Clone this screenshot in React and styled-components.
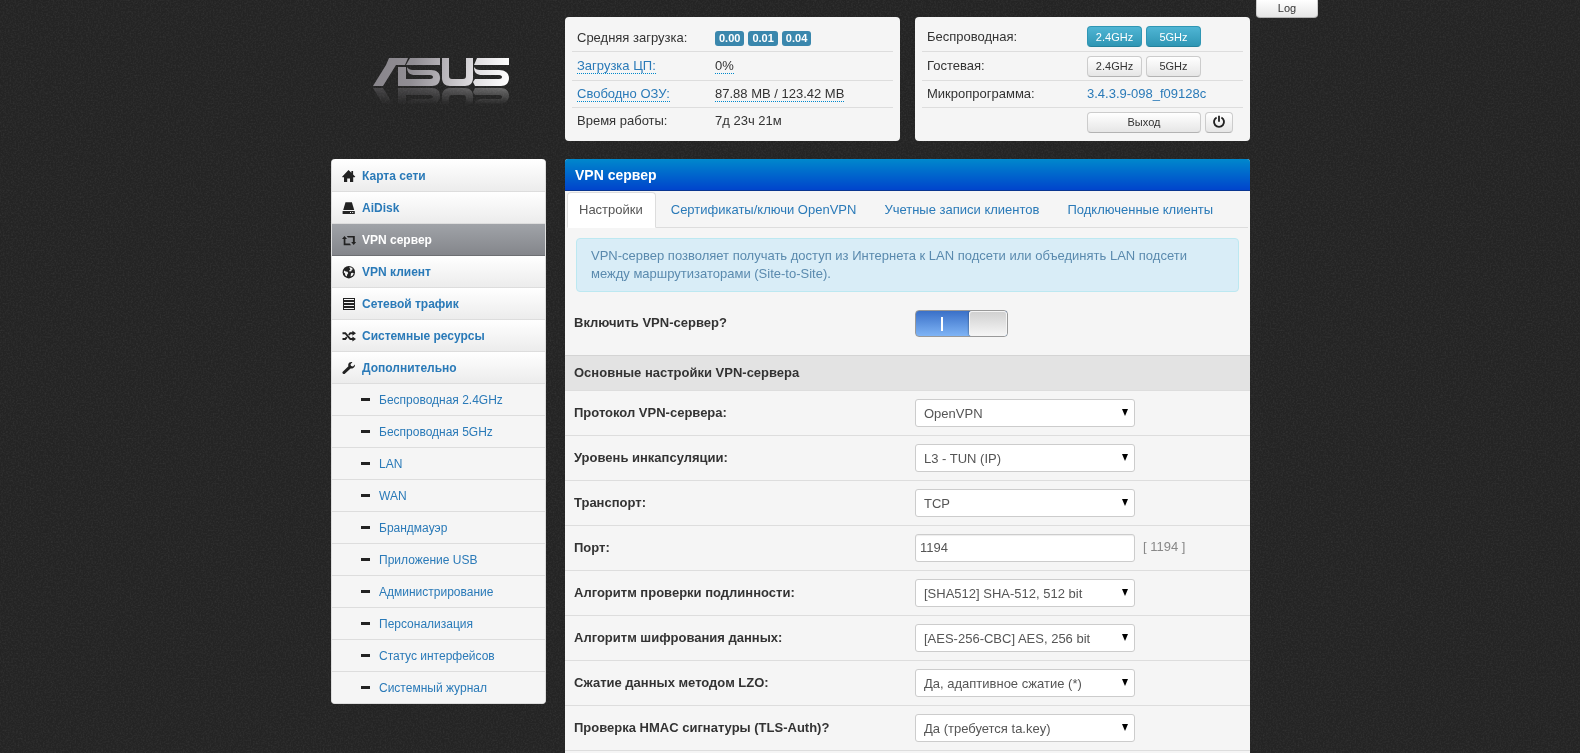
import React, { useState } from 'react';
import styled, { createGlobalStyle, css } from 'styled-components';

const menu = [
    { title: 'Карта сети', icon: 'home' },
    { title: 'AiDisk', icon: 'disk' },
    { title: 'VPN сервер', icon: 'retweet' },
    { title: 'VPN клиент', icon: 'globe' },
    { title: 'Сетевой трафик', icon: 'tasks' },
    { title: 'Системные ресурсы', icon: 'random' },
    { title: 'Дополнительно', icon: 'wrench' },
];

const subMenu = [
    'Беспроводная 2.4GHz',
    'Беспроводная 5GHz',
    'LAN',
    'WAN',
    'Брандмауэр',
    'Приложение USB',
    'Администрирование',
    'Персонализация',
    'Статус интерфейсов',
    'Системный журнал',
];

const tabs = [
    'Настройки',
    'Сертификаты/ключи OpenVPN',
    'Учетные записи клиентов',
    'Подключенные клиенты',
];

const fields = [
    { id: 'type', label: 'Протокол VPN-сервера:', options: ['OpenVPN'] },
    { id: 'atun', label: 'Уровень инкапсуляции:', options: ['L3 - TUN (IP)'] },
    { id: 'prot', label: 'Транспорт:', options: ['TCP'] },
    { id: 'port', label: 'Порт:', value: '1194', hint: '[ 1194 ]' },
    { id: 'mdig', label: 'Алгоритм проверки подлинности:', options: ['[SHA512] SHA-512, 512 bit'] },
    { id: 'ciph', label: 'Алгоритм шифрования данных:', options: ['[AES-256-CBC] AES, 256 bit'] },
    { id: 'clzo', label: 'Сжатие данных методом LZO:', options: ['Да, адаптивное сжатие (*)'] },
    { id: 'tlsa', label: 'Проверка HMAC сигнатуры (TLS-Auth)?', options: ['Да (требуется ta.key)'] },
];

function Icon({ name }) {
    return (
        <Glyph viewBox="0 0 14 14" aria-hidden="true">
            {name === 'home' && (
                <path d="M6.5 1 9.4 3.8V2h1.7v3.5l2.2 2.2-.6.6h-1.5V13H8V9.4H5.2V13H2V8.3H.5l-.4-.6z" />
            )}
            {name === 'disk' && (
                <>
                    <path d="M3.5 1.2h6.4L12.2 9H1.2z" />
                    <path fillRule="evenodd" d="M.6 10h12.2v3H.6zM8 11v1h1v-1zM10.2 11v1h1v-1z" />
                </>
            )}
            {name === 'retweet' && (
                <path d="M2.5 3 5 6H3.4v4.6h4.4l1.2 1.6H1.7V6H0zM4.8 3h8v6h1.4l-2.5 3-2.5-3h1.7V4.6H6z" />
            )}
            {name === 'globe' && (
                <>
                    <circle cx="6.8" cy="7.2" r="6.2" />
                    <path fill="#f3f3f3" d="M7.2 2.2 9.3 2.4 11.2 4.2 9.9 4.6 9.3 6.2 7.6 6.6 7.2 5.4 8.4 4.4zM2.2 5.4 3.8 6.4 5.5 6.8 6.2 8.2 5.2 9.4 4.8 11.4 3.2 10.2 3 8.6 1.8 7.6zM9 8.2 10.8 7.8 11.8 8.6 10.4 10.8 8.6 11.6 8.8 10z" />
                </>
            )}
            {name === 'tasks' && (
                <path fillRule="evenodd" d="M1 1h12v3H1zM2 2v1h10V2zM1 4h12v3H1zM2 5v1h10V5zM1 7h12v3H1zM2 8v1h10V8zM1 10h12v3H1zM2 11v1h10v-1z" />
            )}
            {name === 'random' && (
                <>
                    <path fill="none" stroke="#222" strokeWidth="1.9" d="M.5 4.2h2.8l5 5.8h3M.5 10h2.8l1.5-1.8M6.8 6l1.5-1.8h3" />
                    <path d="M10.4 1.8 14 4.2l-3.6 2.6zM10.4 7.4 14 10l-3.6 2.6z" />
                </>
            )}
            {name === 'wrench' && (
                <path d="M12.9 3.5 11 5.5 9 5 8.5 3.2 10.4 1.2C8.8.7 6.8 1.4 6.3 3.2c-.2.8-.1 1.4.1 2L1 10.4c-.8.8-.8 1.5-.1 2.2s1.5.7 2.2-.1l5.5-5.1c2.4.5 4.8-1.3 4.3-3.9z" />
            )}
            {name === 'power' && (
                <>
                    <path fill="none" stroke="#222" strokeWidth="1.9" d="M4.6 2.5a5 5 0 1 0 4.8 0" />
                    <path d="M6.1.8h1.8v6H6.1z" />
                </>
            )}
        </Glyph>
    );
}

function Logo() {
    return (
        <LogoSvg viewBox="0 0 140 50" role="img" aria-label="ASUS">
            <defs>
                <linearGradient id="metal" gradientUnits="userSpaceOnUse" x1="0" x2="137" y1="4" y2="26">
                    <stop offset="0" stopColor="#88858b" />
                    <stop offset=".3" stopColor="#918e94" />
                    <stop offset=".5" stopColor="#b3b0b5" />
                    <stop offset=".75" stopColor="#e0dee1" />
                    <stop offset="1" stopColor="#fff" />
                </linearGradient>
                <linearGradient id="fade" x1="0" x2="0" y1="0" y2="1">
                    <stop offset=".4" stopColor="#fff" stopOpacity="0" />
                    <stop offset="1" stopColor="#fff" stopOpacity=".35" />
                </linearGradient>
                <mask id="mirror">
                    <rect width="140" height="30" fill="url(#fade)" />
                </mask>
                <g id="mark" fill="url(#metal)">
                    <path d="M17 1h19l-3 7h-9L11 29H1L14 8z" />
                    <path d="M38 1h30v7H34zM26 10h8v19h-8z" />
                    <path d="M35 10c1 2 3 3 6 3h18c6 0 9 3 9 8s-3 8-8 8H34v-7h24c2 0 3-1 3-2s-1-2-3-2H43c-5 0-8-2-8-8z" />
                    <path d="M70 1h7v18c0 2 1 3 3 3h11c2 0 3-1 3-3V1h7v20c0 5-3 8-8 8H78c-5 0-8-3-8-8z" />
                    <path d="M105 1h32v7h-35zM102 10c1 2 3 3 6 3h19c6 0 10 3 10 8s-3 8-8 8h-26l-2-4 2-3h24c2 0 3-1 3-2s-1-2-3-2h-17c-5 0-8-2-8-8z" />
                </g>
            </defs>
            <use href="#mark" />
            <g transform="matrix(1 0 0 -1 0 60)">
                <g mask="url(#mirror)">
                    <use href="#mark" />
                </g>
            </g>
        </LogoSvg>
    );
}

function App() {
    const [tab, setTab] = useState(0);
    const [enabled, setEnabled] = useState(true);

    return (
        <>
            <GlobalStyle />
            <Backdrop aria-hidden="true">
                <filter id="grain">
                    <feTurbulence type="fractalNoise" baseFrequency=".6" numOctaves="2" seed="4" />
                    <feColorMatrix values="0 0 0 0 1  0 0 0 0 1  0 0 0 0 1  .5 0 0 0 -.19" />
                </filter>
                <rect width="100%" height="100%" filter="url(#grain)" opacity=".25" />
            </Backdrop>

            <Page>
                <LogButton type="button">Log</LogButton>
                <Brand>
                    <Logo />
                </Brand>

                <Status>
                    <Card>
                        <Row $first>
                            <span>Средняя загрузка:</span>
                            <Group>
                                <Badge>0.00</Badge>
                                <Badge>0.01</Badge>
                                <Badge>0.04</Badge>
                            </Group>
                        </Row>
                        <Row>
                            <span><DottedLink href="#cpu">Загрузка ЦП:</DottedLink></span>
                            <span><Dotted>0%</Dotted></span>
                        </Row>
                        <Row $short>
                            <span><DottedLink href="#mem">Свободно ОЗУ:</DottedLink></span>
                            <span><Dotted>87.88 MB / 123.42 MB</Dotted></span>
                        </Row>
                        <Row $short>
                            <span>Время работы:</span>
                            <span>7д 23ч 21м</span>
                        </Row>
                    </Card>
                    <Card $wide>
                        <Row>
                            <span>Беспроводная:</span>
                            <Group>
                                <SmallButton type="button" $info>2.4GHz</SmallButton>
                                <SmallButton type="button" $info>5GHz</SmallButton>
                            </Group>
                        </Row>
                        <Row>
                            <span>Гостевая:</span>
                            <Group>
                                <SmallButton type="button">2.4GHz</SmallButton>
                                <SmallButton type="button">5GHz</SmallButton>
                            </Group>
                        </Row>
                        <Row $short>
                            <span>Микропрограмма:</span>
                            <span><Link href="#firmware">3.4.3.9-098_f09128c</Link></span>
                        </Row>
                        <Row>
                            <span />
                            <Group>
                                <SmallButton type="button" $size="114px">Выход</SmallButton>
                                <SmallButton type="button" $size="28px" aria-label="Перезагрузка">
                                    <Icon name="power" />
                                </SmallButton>
                            </Group>
                        </Row>
                    </Card>
                </Status>

                <Sidebar>
                    {
                        menu.map((item) => (
                            <MenuItem key={item.title} href="#menu" $active={item.icon === 'retweet'}>
                                <Icon name={item.icon} />
                                {item.title}
                            </MenuItem>
                        ))
                    }
                    {
                        subMenu.map((title) => (
                            <SubItem key={title} href="#submenu">
                                <Dash />
                                {title}
                            </SubItem>
                        ))
                    }
                </Sidebar>

                <Main>
                    <Title>VPN сервер</Title>
                    <Tabs>
                        {
                            tabs.map((title, i) => (
                                <Tab
                                    key={title}
                                    href="#tab"
                                    $active={i === tab}
                                    onClick={() => setTab(i)}
                                >
                                    {title}
                                </Tab>
                            ))
                        }
                    </Tabs>
                    <Alert>
                        VPN-сервер позволяет получать доступ из Интернета к LAN подсети или объединять LAN подсети
                        между маршрутизаторами (Site-to-Site).
                    </Alert>
                    <SwitchRow>
                        <label htmlFor="vpns_enable">Включить VPN-сервер?</label>
                        <div>
                            <Switch
                                id="vpns_enable"
                                type="checkbox"
                                checked={enabled}
                                onChange={(e) => setEnabled(e.target.checked)}
                            />
                        </div>
                    </SwitchRow>
                    <Section>Основные настройки VPN-сервера</Section>
                    {
                        fields.map((field) => (
                            <Field key={field.id}>
                                <label htmlFor={field.id}>{field.label}</label>
                                {
                                    field.options ? (
                                        <SelectBox>
                                            <Select id={field.id}>
                                                {field.options.map((o) => <option key={o}>{o}</option>)}
                                            </Select>
                                        </SelectBox>
                                    ) : (
                                        <Group>
                                            <Input id={field.id} type="text" defaultValue={field.value} />
                                            <Hint>{field.hint}</Hint>
                                        </Group>
                                    )
                                }
                            </Field>
                        ))
                    }
                </Main>
            </Page>
        </>
    );
}

export default App;

const GlobalStyle = createGlobalStyle`
    * {
        box-sizing: border-box;
    }
    html {
        overflow: hidden auto;
        scrollbar-width: none;
        background-color: #242424;
    }
    body {
        margin: 0;
        font-family: "Liberation Sans", Arial, sans-serif;
        font-size: 13px;
        line-height: 18px;
        color: #333;
    }
    a {
        text-decoration: none;
    }
    button, input, select {
        font-family: inherit;
    }
`;

const Backdrop = styled.svg`
    position: fixed;
    inset: 0;
    width: 100%;
    height: 100%;
    z-index: -1;
`;

const Page = styled.div`
    position: relative;
    display: grid;
    grid-template-columns: 215px minmax(0, 1fr);
    column-gap: 19px;
    row-gap: 18px;
    align-items: start;
    max-width: 920px;
    margin: 0 auto;
    padding: 17px 0 0 1px;
`;

const buttonFace = css`
    background: linear-gradient(#fff, #e6e6e6);
    border: 1px solid #ccc;
    border-bottom-color: #b3b3b3;
    color: #333;
    cursor: pointer;
`;

const LogButton = styled.button`
    ${buttonFace}
    position: absolute;
    top: 0;
    left: 100%;
    width: 62px;
    height: 18px;
    margin-left: 6px;
    padding: 0 0 2px;
    border-top: none;
    border-radius: 0 0 4px 4px;
    font-size: 11px;
`;

const Brand = styled.div`
    padding: 40px 0 0 41px;
`;

const LogoSvg = styled.svg`
    display: block;
    width: 140px;
    height: 50px;
`;

const Status = styled.div`
    display: grid;
    grid-template-columns: 1fr 1fr;
    gap: 15px;
`;

const Card = styled.div`
    padding: 5px 7px;
    height: 124px;
    border-radius: 4px;
    background-color: #f5f5f5;
    > div {
        grid-template-columns: ${({ $wide }) => ($wide ? '160px' : '138px')} 1fr;
    }
`;

const Row = styled.div`
    display: grid;
    align-items: center;
    height: ${({ $short }) => ($short ? '27px' : '29px')};
    padding: ${({ $first }) => ($first ? '3px 5px 0' : '0 5px')};
    border-top: 1px solid #ddd;
    &:first-child {
        border-top: none;
    }
`;

const Group = styled.div`
    display: flex;
    align-items: center;
    gap: 4px;
`;

const Badge = styled.span`
    padding: 1px 4px;
    border-radius: 3px;
    background-color: #3a87ad;
    color: #fff;
    font-size: 11px;
    font-weight: bold;
    line-height: 13px;
`;

const Link = styled.a`
    color: #2a7ab8;
`;

const Dotted = styled.span`
    border-bottom: 1px dotted #08c;
`;

const DottedLink = styled(Link)`
    border-bottom: 1px dotted #08c;
`;

const SmallButton = styled.button`
    ${buttonFace}
    display: flex;
    align-items: center;
    justify-content: center;
    width: ${({ $size }) => $size || '55px'};
    height: 21px;
    padding: 0;
    border-radius: 4px;
    font-size: 11px;
    ${({ $info }) => $info && css`
        background: linear-gradient(#4fb5d4, #2f96b4);
        border-color: #2f96b4;
        border-bottom-color: #24819c;
        color: #fff;
    `}
`;

const Glyph = styled.svg`
    flex: none;
    width: 14px;
    height: 14px;
    fill: #222;
`;

const Sidebar = styled.nav`
    padding-top: 1px;
    border: 1px solid #ddd;
    border-top: none;
    border-radius: 4px;
    overflow: hidden;
    background-color: #fff;
`;

const MenuItem = styled.a`
    display: flex;
    align-items: center;
    gap: 6px;
    height: 32px;
    padding-left: 10px;
    border-bottom: 1px solid #ddd;
    background: linear-gradient(#fff, #ececec);
    color: #2a7ab8;
    font-size: 12px;
    font-weight: bold;
    ${({ $active }) => $active && css`
        background: linear-gradient(#a0a3a8, #84868b);
        border-bottom-color: #6d6f73;
        color: #fff;
    `}
`;

const SubItem = styled.a`
    display: flex;
    align-items: center;
    gap: 9px;
    height: 32px;
    padding-left: 29px;
    border-bottom: 1px solid #ddd;
    background-color: #f5f5f5;
    color: #2a7ab8;
    font-size: 12px;
    &:last-child {
        border-bottom: none;
        height: 31px;
    }
`;

const Dash = styled.span`
    width: 9px;
    height: 3px;
    background-color: #222;
`;

const Main = styled.main`
    padding-bottom: 16px;
    border-radius: 3px 3px 0 0;
    background-color: #f5f5f5;
    overflow: hidden;
`;

const Title = styled.h1`
    margin: 0;
    padding: 7px 10px 6px;
    border-bottom: 1px solid #0a3690;
    background: linear-gradient(#0088cc, #0044cc);
    color: #fff;
    font-size: 14px;
    line-height: 18px;
`;

const Tabs = styled.nav`
    display: flex;
    gap: 3px;
    margin: 1px 2px 0;
    border-bottom: 1px solid #ddd;
`;

const Tab = styled.a`
    padding: 8px 12px 8px 11px;
    margin-bottom: -1px;
    border: 1px solid transparent;
    border-radius: 4px 4px 0 0;
    color: #2a7ab8;
    ${({ $active }) => $active && css`
        background-color: #fff;
        border-color: #ddd;
        border-bottom-color: #fff;
        color: #555;
    `}
`;

const Alert = styled.p`
    margin: 10px 11px 0;
    padding: 8px 14px;
    border: 1px solid #bce8f1;
    border-radius: 4px;
    background-color: #d9edf7;
    color: #5a8aae;
`;

const fieldGrid = css`
    display: grid;
    grid-template-columns: 341px 1fr;
    align-items: center;
    padding: 0 9px;
    label {
        font-weight: bold;
    }
`;

const SwitchRow = styled.div`
    ${fieldGrid}
    height: 63px;
    label {
        padding-bottom: 2px;
    }
`;

const Switch = styled.input`
    appearance: none;
    position: relative;
    display: block;
    width: 93px;
    height: 27px;
    margin: 0;
    border: 1px solid #999;
    border-radius: 4px;
    background: linear-gradient(#3a70c8, #7fb4f5);
    overflow: hidden;
    cursor: pointer;
    &::before {
        content: "";
        position: absolute;
        top: 6px;
        left: 25px;
        width: 2px;
        height: 14px;
        background-color: #fff;
    }
    &::after {
        content: "";
        position: absolute;
        top: 0;
        bottom: 0;
        right: 0;
        width: 38px;
        border-radius: 3px;
        background: linear-gradient(#cfcfcf, #f6f6f6);
        box-shadow: 0 0 2px #234, inset 0 0 0 1px #f4f4f4;
    }
    &:not(:checked)::after {
        right: auto;
        left: 0;
    }
`;

const Section = styled.h2`
    margin: 0;
    padding: 8px 9px;
    border-top: 1px solid #d4d4d4;
    background-color: #e3e3e3;
    font-size: 13px;
    line-height: 18px;
`;

const Field = styled.div`
    ${fieldGrid}
    height: 45px;
    border-top: 1px solid #ddd;
    &:last-child {
        border-bottom: 1px solid #ddd;
        height: 46px;
    }
`;

const SelectBox = styled.div`
    position: relative;
    width: 220px;
    &::after {
        content: "";
        position: absolute;
        top: 10px;
        right: 7px;
        border: solid transparent;
        border-width: 7px 3px 0;
        border-top-color: #000;
        pointer-events: none;
    }
`;

const control = css`
    display: block;
    width: 220px;
    height: 28px;
    border: 1px solid #ccc;
    border-radius: 3px;
    background-color: #fff;
    color: #555;
    font-size: 13px;
`;

const Select = styled.select`
    ${control}
    appearance: none;
    padding: 0 20px 0 8px;
`;

const Input = styled.input`
    ${control}
    padding: 0 4px 2px;
    box-shadow: inset 0 1px 1px rgba(0, 0, 0, .075);
`;

const Hint = styled.span`
    margin-left: 4px;
    padding-bottom: 2px;
    color: #888;
`;
